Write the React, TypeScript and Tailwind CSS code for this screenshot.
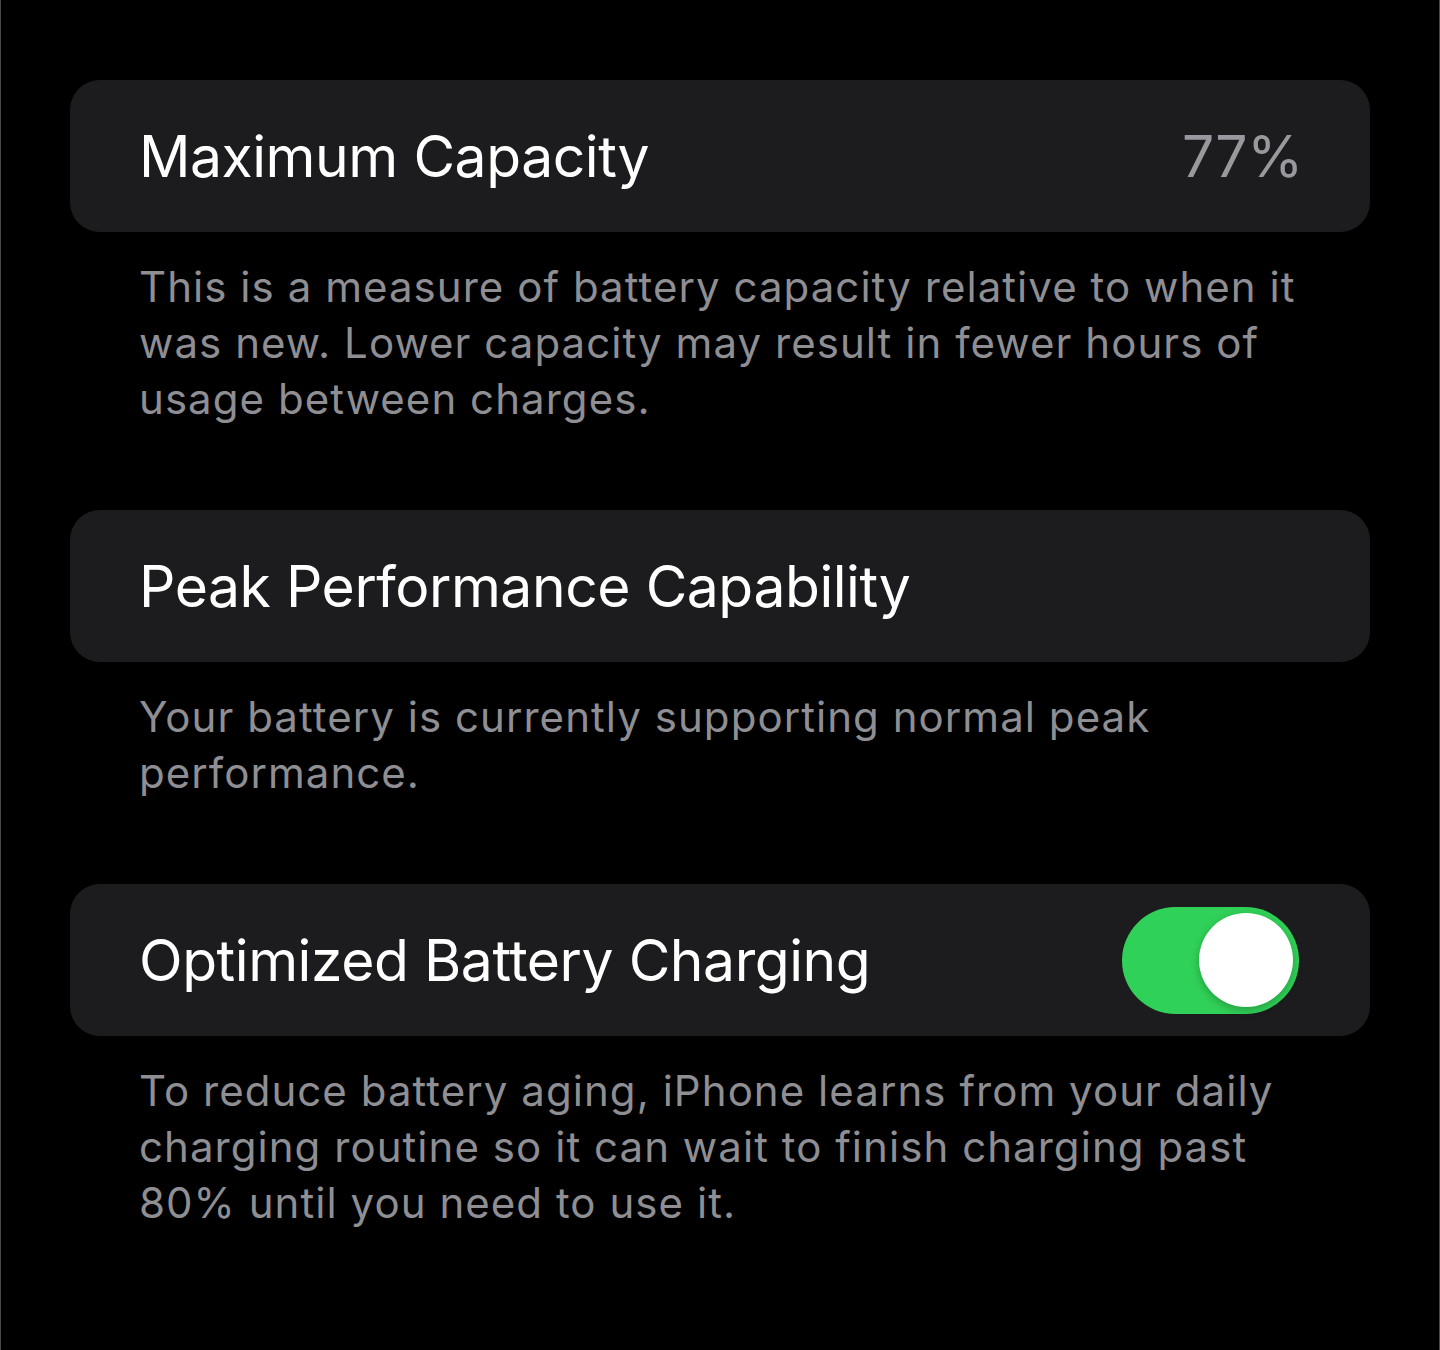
import React from "react";

type Section = {
  title: string;
  value?: string;
  toggle?: boolean;
  footer: string[];
};

const sections: Section[] = [
  {
    title: "Maximum Capacity",
    value: "77%",
    footer: [
      "This is a measure of battery capacity relative to when it",
      "was new. Lower capacity may result in fewer hours of",
      "usage between charges.",
    ],
  },
  {
    title: "Peak Performance Capability",
    footer: [
      "Your battery is currently supporting normal peak",
      "performance.",
    ],
  },
  {
    title: "Optimized Battery Charging",
    toggle: true,
    footer: [
      "To reduce battery aging, iPhone learns from your daily",
      "charging routine so it can wait to finish charging past",
      "80% until you need to use it.",
    ],
  },
];

function Toggle() {
  return (
    <div className="flex h-[107px] w-[177px] items-center justify-end rounded-full bg-[#30d158] pr-[6px]">
      <div className="h-[94px] w-[94px] rounded-full bg-white shadow-[0_3px_8px_rgba(0,0,0,0.25)]" />
    </div>
  );
}

export default function App() {
  return (
    <div
      className="min-h-[1350px] w-full border-x border-[#4a4a4c] bg-black pt-[80px]"
      style={{ fontFamily: "Inter, 'Noto Sans', sans-serif" }}
    >
      <div className="mx-[69px] flex flex-col gap-[83px]">
        {sections.map((s) => (
          <section key={s.title}>
            <div className="flex h-[152px] items-center justify-between rounded-[30px] bg-[#1c1c1e] pl-[69px] pr-[71px]">
              <span className="text-[57px] leading-none tracking-[-0.45px] text-white">
                {s.title}
              </span>
              {s.value && (
                <span className="mr-[-4px] text-[57px] leading-none tracking-[-0.2px] text-[#98989e]">
                  {s.value}
                </span>
              )}
              {s.toggle && <Toggle />}
            </div>
            <p className="mt-[27px] pl-[69px] text-[42px] leading-[56px] tracking-[1.05px] text-[#8e8e93]">
              {s.footer.map((line) => (
                <span key={line} className="block whitespace-nowrap">
                  {line}
                </span>
              ))}
            </p>
          </section>
        ))}
      </div>
    </div>
  );
}
